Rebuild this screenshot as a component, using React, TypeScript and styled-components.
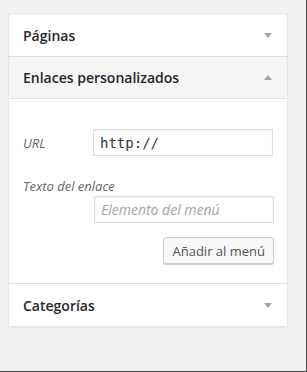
import React from 'react';
import styled, { createGlobalStyle } from 'styled-components';

const GlobalStyle = createGlobalStyle`
    html, body {
        margin: 0;
        padding: 0;
        background: #f1f1f1;
    }

    body {
        font-family: "Open Sans", "Noto Sans", sans-serif;
        color: #444;
    }
`;

const Page = styled.div`
    box-sizing: border-box;
    width: 307px;
    height: 372px;
    padding: 13px 0 0 8px;
    background: #f1f1f1;
    border-right: 1px solid #444;
    border-bottom: 1px solid #444;
`;

const Panel = styled.div`
    width: 280px;
    box-sizing: border-box;
    background: #fff;
    border: 1px solid #e5e5e5;
    box-shadow: 0 1px 1px rgba(0, 0, 0, 0.04);
`;

const Section = styled.div`
    & + & {
        border-top: 1px solid #dfdfdf;
    }
`;

const SectionTitle = styled.div<{ open?: boolean }>`
    display: flex;
    align-items: center;
    justify-content: space-between;
    height: 42px;
    box-sizing: border-box;
    padding: 0 14px 0 14px;
    background: ${props => props.open ? '#f5f5f5' : '#fff'};
    border-bottom: ${props => props.open ? '1px solid #dfdfdf' : 'none'};
    font-size: 14px;
    font-weight: 600;
    color: #23282d;
`;

const Arrow = styled.span<{ up?: boolean }>`
    width: 0;
    height: 0;
    border-left: 4px solid transparent;
    border-right: 4px solid transparent;
    ${props => props.up
        ? 'border-bottom: 5px solid #a0a5aa;'
        : 'border-top: 5px solid #a0a5aa;'}
    margin-right: 1px;
`;

const Content = styled.div`
    display: flex;
    flex-direction: column;
    padding: 30px 14px 19px 14px;
`;

const FieldRow = styled.div`
    display: flex;
    align-items: center;
`;

const Label = styled.label<{ wide?: boolean }>`
    width: ${props => props.wide ? 'auto' : '71px'};
    font-size: 13px;
    font-style: italic;
    line-height: 18px;
    color: #666;
`;

const TextLabel = styled(Label)`
    margin-top: 21px;
    margin-bottom: 1px;
`;

const Input = styled.input<{ mono?: boolean }>`
    box-sizing: border-box;
    width: 180px;
    height: 27px;
    margin: 0;
    padding: 0 6px;
    border: 1px solid #ddd;
    box-shadow: inset 0 1px 2px rgba(0, 0, 0, 0.07);
    background: #fff;
    outline: none;
    font-family: ${props => props.mono ? '"DejaVu Sans Mono", "Liberation Mono", monospace' : '"Open Sans", sans-serif'};
    font-size: 14px;
    color: #32373c;

    &::placeholder {
        color: #a0a5aa;
        font-style: italic;
    }
`;

const IndentedInput = styled(Input)`
    margin-left: 71px;
`;

const ButtonRow = styled.div`
    display: flex;
    justify-content: flex-end;
    margin-top: 14px;
`;

const Button = styled.button`
    box-sizing: border-box;
    height: 27px;
    padding: 0 8px;
    margin-right: -1px;
    border: 1px solid #ccc;
    border-radius: 3px;
    background: #f7f7f7;
    box-shadow: 0 1px 0 #ccc;
    font-family: "Open Sans", sans-serif;
    font-size: 13px;
    color: #555;
`;

const App = () => {
    return (
        <>
            <GlobalStyle/>
            <Page>
                <Panel>
                    <Section>
                        <SectionTitle>
                            Páginas
                            <Arrow/>
                        </SectionTitle>
                    </Section>
                    <Section>
                        <SectionTitle open>
                            Enlaces personalizados
                            <Arrow up/>
                        </SectionTitle>
                        <Content>
                            <FieldRow>
                                <Label>URL</Label>
                                <Input mono defaultValue="http://"/>
                            </FieldRow>
                            <TextLabel wide>Texto del enlace</TextLabel>
                            <IndentedInput placeholder="Elemento del menú"/>
                            <ButtonRow>
                                <Button>Añadir al menú</Button>
                            </ButtonRow>
                        </Content>
                    </Section>
                    <Section>
                        <SectionTitle>
                            Categorías
                            <Arrow/>
                        </SectionTitle>
                    </Section>
                </Panel>
            </Page>
        </>
    );
};

export default App;
